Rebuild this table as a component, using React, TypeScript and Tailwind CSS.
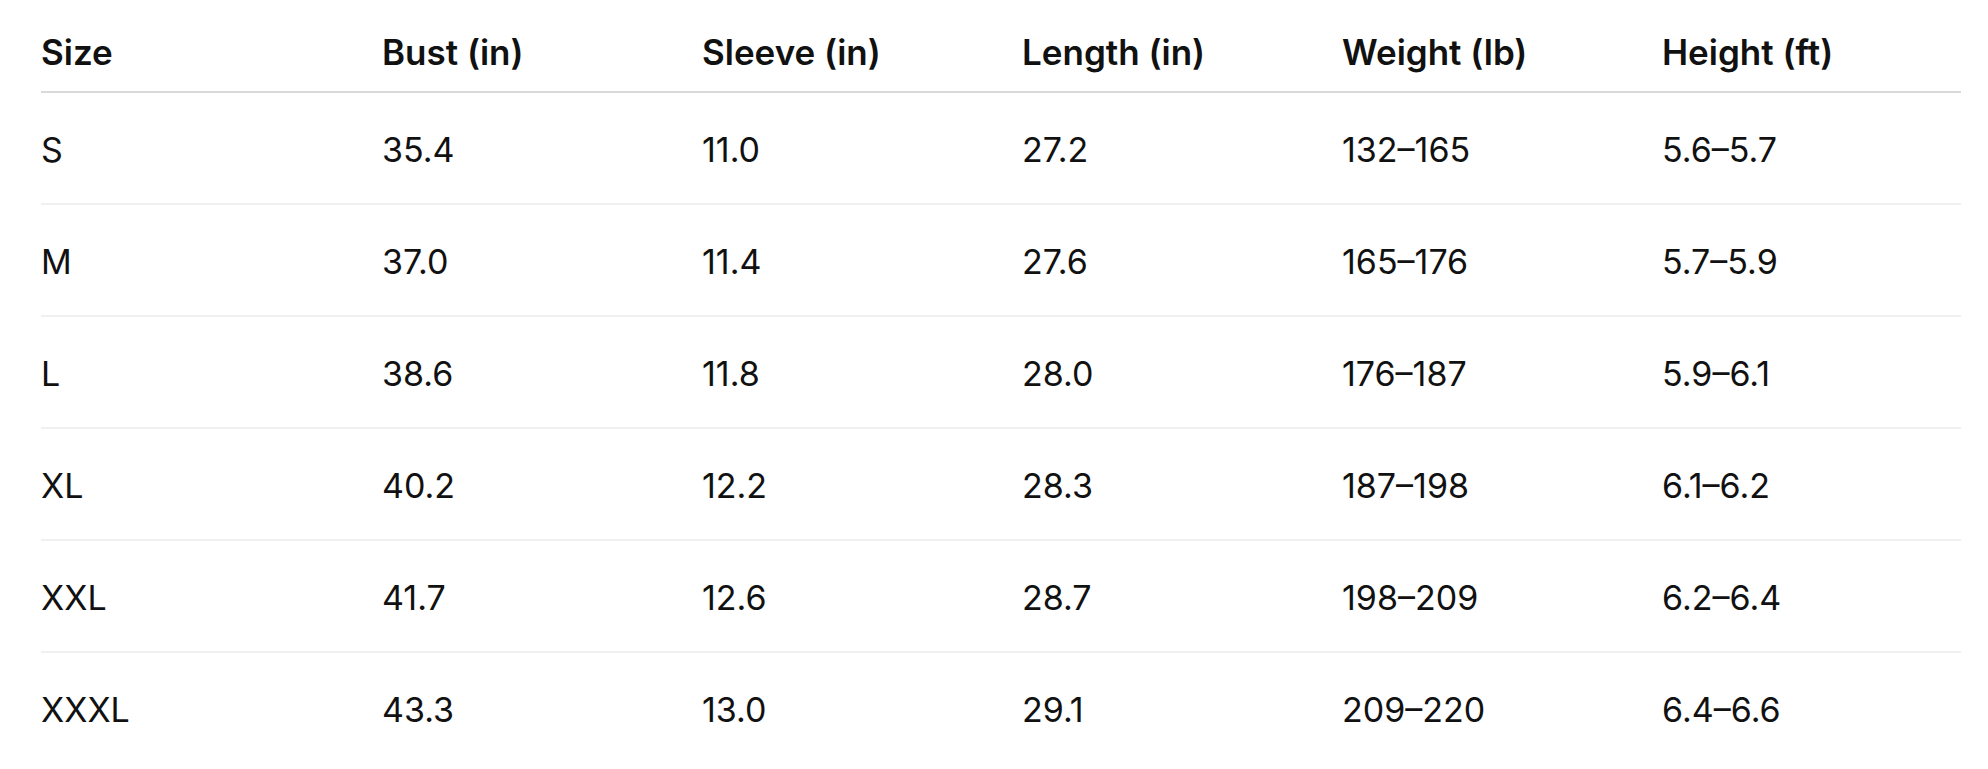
const headers = ["Size", "Bust (in)", "Sleeve (in)", "Length (in)", "Weight (lb)", "Height (ft)"];

const rows = [
  ["S", "35.4", "11.0", "27.2", "132–165", "5.6–5.7"],
  ["M", "37.0", "11.4", "27.6", "165–176", "5.7–5.9"],
  ["L", "38.6", "11.8", "28.0", "176–187", "5.9–6.1"],
  ["XL", "40.2", "12.2", "28.3", "187–198", "6.1–6.2"],
  ["XXL", "41.7", "12.6", "28.7", "198–209", "6.2–6.4"],
  ["XXXL", "43.3", "13.0", "29.1", "209–220", "6.4–6.6"],
];

export default function App() {
  return (
    <div className="min-h-screen bg-white pl-[41px] pt-[16px] font-['Inter',sans-serif] text-[#111111]">
      <table className="w-[1920px] table-fixed border-collapse text-left leading-[48px]">
        <colgroup>
          <col className="w-[341px]" />
          <col className="w-[320px]" />
          <col className="w-[320px]" />
          <col className="w-[320px]" />
          <col className="w-[320px]" />
          <col />
        </colgroup>
        <thead>
          <tr className="border-b-2 border-[#d9d9d9]">
            {headers.map((h) => (
              <th key={h} className="pt-[12px] pb-[15px] text-[35px] font-semibold">
                {h}
              </th>
            ))}
          </tr>
        </thead>
        <tbody>
          {rows.map((r, i) => (
            <tr key={r[0]} className={i < rows.length - 1 ? "border-b-2 border-[#f0f0f0]" : ""}>
              {r.map((c, j) => (
                <td key={j} className="pt-[33px] pb-[29px] text-[34px] font-normal">
                  {c}
                </td>
              ))}
            </tr>
          ))}
        </tbody>
      </table>
    </div>
  );
}
